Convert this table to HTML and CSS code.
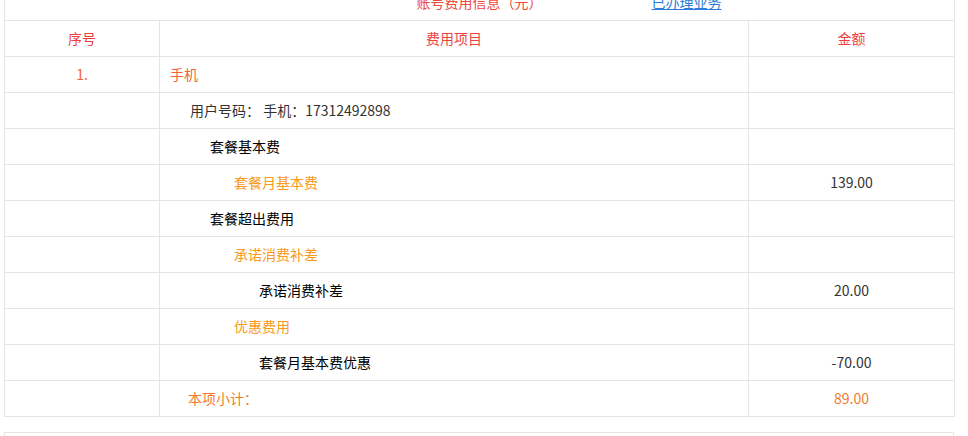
FILE: index.html
```html
<!DOCTYPE html>
<html lang="zh-CN">
<head>
<meta charset="utf-8">
<title>账号费用信息</title>
<link rel="stylesheet" href="styles.css">
</head>
<body>
<div class="page">
  <table class="fee">
    <colgroup>
      <col class="c-no">
      <col class="c-item">
      <col class="c-amt">
    </colgroup>
    <tr class="title-row">
      <td colspan="3">
        <div class="title-bar">
          <span></span>
          <span class="title">账号费用信息（元）</span>
          <span class="link-wrap"><a class="link" href="#">已办理业务</a></span>
        </div>
      </td>
    </tr>
    <tr class="head">
      <td>序号</td>
      <td>费用项目</td>
      <td>金额</td>
    </tr>
    <tr>
      <td class="no">1.</td>
      <td class="lv0 red">手机</td>
      <td></td>
    </tr>
    <tr>
      <td></td>
      <td class="lv1 dark">用户号码： 手机：17312492898</td>
      <td></td>
    </tr>
    <tr>
      <td></td>
      <td class="lv2 black">套餐基本费</td>
      <td></td>
    </tr>
    <tr>
      <td></td>
      <td class="lv3 orange">套餐月基本费</td>
      <td class="amt">139.00</td>
    </tr>
    <tr>
      <td></td>
      <td class="lv2 black">套餐超出费用</td>
      <td></td>
    </tr>
    <tr>
      <td></td>
      <td class="lv3 orange">承诺消费补差</td>
      <td></td>
    </tr>
    <tr>
      <td></td>
      <td class="lv4 black">承诺消费补差</td>
      <td class="amt">20.00</td>
    </tr>
    <tr>
      <td></td>
      <td class="lv3 orange">优惠费用</td>
      <td></td>
    </tr>
    <tr>
      <td></td>
      <td class="lv4 black">套餐月基本费优惠</td>
      <td class="amt">-70.00</td>
    </tr>
    <tr>
      <td></td>
      <td class="sub">本项小计：</td>
      <td class="amt total">89.00</td>
    </tr>
  </table>
  <div class="next-box"></div>
  <div class="watermark" aria-hidden="true"><span class="wm-big">三水网</span><span class="wm-small">WWW.JYSS.NET</span></div>
</div>
</body>
</html>
```

FILE: styles.css
```css
html, body {
  margin: 0;
  padding: 0;
  background: #fff;
}
body {
  font-family: "Noto Sans CJK SC", "Microsoft YaHei", sans-serif;
  font-size: 14px;
  color: #333;
  overflow: hidden;
}
.page {
  position: relative;
  margin-top: -16px;
  padding-left: 4px;
}
.fee {
  border-collapse: collapse;
  table-layout: fixed;
  width: 950px;
}
.c-no { width: 155px; }
.c-item { width: 589px; }
.c-amt { width: 206px; }
.fee td {
  border: 1px solid #e5e5e5;
  height: 35px;
  padding: 0;
  line-height: 19px;
  vertical-align: middle;
}
.title-bar {
  display: grid;
  grid-template-columns: 1fr auto 1fr;
  align-items: center;
}
.title { color: #f0473f; }
.link-wrap { padding-left: 109px; }
.link {
  color: #2f7bd8;
  text-decoration: underline;
}
.head td {
  text-align: center;
  color: #ee3f3f;
}
.no {
  text-align: center;
  color: #f0643a;
}
.red { color: #f0643a; }
.dark { color: #333; }
.black { color: #000; }
.orange { color: #f89a1c; }
.lv0 { padding-left: 10px !important; }
.lv1 { padding-left: 30px !important; }
.lv2 { padding-left: 50px !important; }
.lv3 { padding-left: 74px !important; }
.lv4 { padding-left: 99px !important; }
.sub {
  padding-left: 28px !important;
  color: #f07d2f;
}
.amt {
  text-align: center;
  color: #333;
}
.total { color: #f07d2f; }
.next-box {
  margin-top: 15px;
  width: 948px;
  height: 40px;
  border: 1px solid #e5e5e5;
}
.watermark {
  position: absolute;
  z-index: -1;
  left: 822px;
  top: 388px;
  width: 128px;
  display: flex;
  flex-direction: column;
  align-items: center;
  color: #edf1f6;
  pointer-events: none;
}
.wm-big {
  font-size: 36px;
  line-height: 36px;
  font-weight: bold;
  letter-spacing: 2px;
}
.wm-small {
  font-family: "Liberation Sans", sans-serif;
  font-size: 11px;
  line-height: 12px;
  letter-spacing: 1px;
}
```
